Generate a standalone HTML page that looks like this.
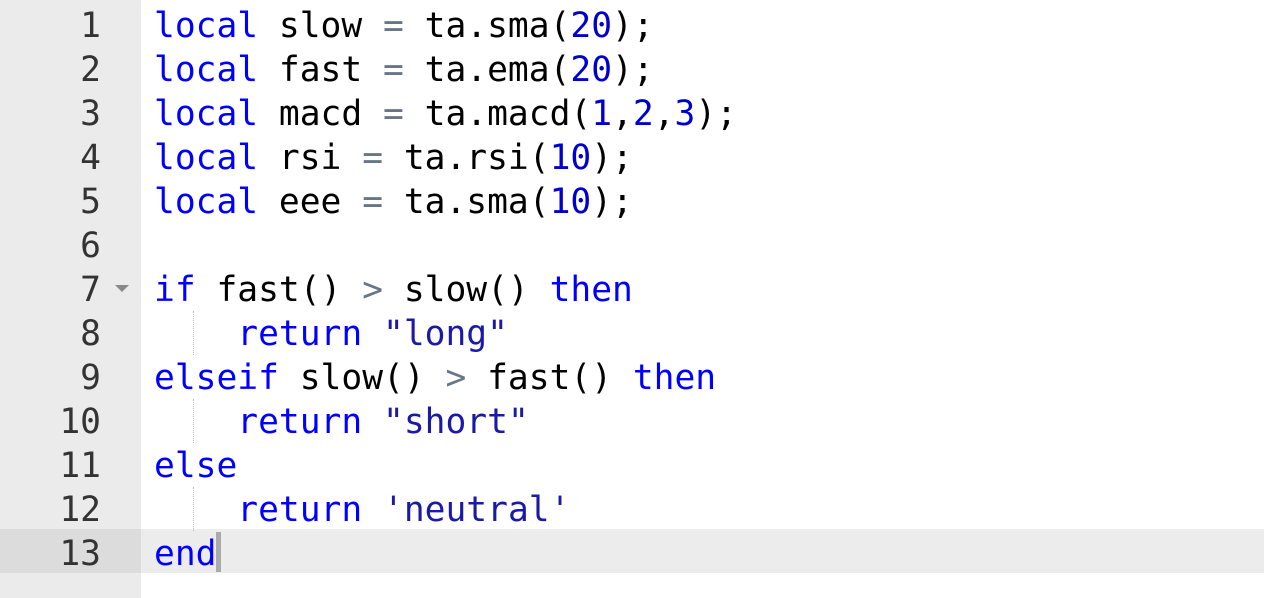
<!DOCTYPE html>
<html><head><style>
body{margin:0;width:1264px;height:598px;overflow:hidden;background:#fff;position:relative;font-family:"DejaVu Sans Mono",monospace;font-size:34.6px;}
.g{position:absolute;left:0;top:0;width:141px;height:598px;background:#ebebeb;}
.ga{position:absolute;left:0;top:529px;width:141px;height:44px;background:#dcdcdc;}
.ca{position:absolute;left:141px;top:529px;width:1123px;height:44px;background:#ececec;}
.ln{position:absolute;left:0;width:101px;text-align:right;color:#333;height:44px;line-height:44px;}
.cl{position:absolute;left:154px;height:44px;line-height:44px;white-space:pre;color:#000;}
.k{color:#0000ff}.n{color:#0000cd}.o{color:#687687}.s{color:#1a1aa6}
.ig{position:absolute;left:193px;width:0;border-left:1px dotted #bbb;height:44px;}
.cur{position:absolute;left:216px;top:532px;width:5px;height:40px;background:#aaa;}
.fold{position:absolute;left:115px;top:285px;width:0;height:0;border-left:7px solid transparent;border-right:7px solid transparent;border-top:7px solid #888;}
</style></head><body>
<div class="g"></div><div class="ga"></div><div class="ca"></div>
<div class="ln" style="top:4px">1</div>
<div class="ln" style="top:48px">2</div>
<div class="ln" style="top:92px">3</div>
<div class="ln" style="top:136px">4</div>
<div class="ln" style="top:180px">5</div>
<div class="ln" style="top:224px">6</div>
<div class="ln" style="top:268px">7</div>
<div class="ln" style="top:312px">8</div>
<div class="ln" style="top:356px">9</div>
<div class="ln" style="top:400px">10</div>
<div class="ln" style="top:444px">11</div>
<div class="ln" style="top:488px">12</div>
<div class="ln" style="top:532px">13</div>
<div class="fold"></div>
<div class="cl" style="top:4px"><span class="k">local</span> slow <span class="o">=</span> ta.sma(<span class="n">20</span>);</div>
<div class="cl" style="top:48px"><span class="k">local</span> fast <span class="o">=</span> ta.ema(<span class="n">20</span>);</div>
<div class="cl" style="top:92px"><span class="k">local</span> macd <span class="o">=</span> ta.macd(<span class="n">1</span>,<span class="n">2</span>,<span class="n">3</span>);</div>
<div class="cl" style="top:136px"><span class="k">local</span> rsi <span class="o">=</span> ta.rsi(<span class="n">10</span>);</div>
<div class="cl" style="top:180px"><span class="k">local</span> eee <span class="o">=</span> ta.sma(<span class="n">10</span>);</div>
<div class="cl" style="top:268px"><span class="k">if</span> fast() <span class="o">&gt;</span> slow() <span class="k">then</span></div>
<div class="ig" style="top:311px"></div>
<div class="cl" style="top:312px">    <span class="k">return</span> <span class="s">"long"</span></div>
<div class="cl" style="top:356px"><span class="k">elseif</span> slow() <span class="o">&gt;</span> fast() <span class="k">then</span></div>
<div class="ig" style="top:399px"></div>
<div class="cl" style="top:400px">    <span class="k">return</span> <span class="s">"short"</span></div>
<div class="cl" style="top:444px"><span class="k">else</span></div>
<div class="ig" style="top:487px"></div>
<div class="cl" style="top:488px">    <span class="k">return</span> <span class="s">'neutral'</span></div>
<div class="cl" style="top:532px"><span class="k">end</span></div>
<div class="cur"></div>
</body></html>
